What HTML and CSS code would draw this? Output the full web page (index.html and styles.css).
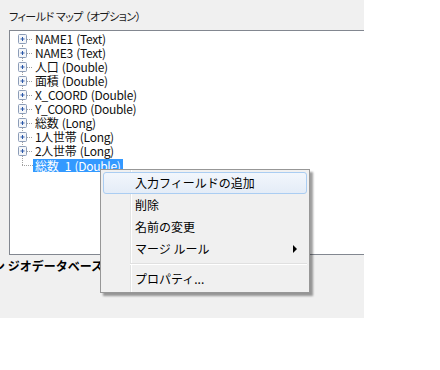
FILE: index.html
```html
<!DOCTYPE html>
<html lang="ja">
<head>
<meta charset="utf-8">
<link rel="stylesheet" href="styles.css">
</head>
<body>
<div class="panel">
  <div class="label">フィールド マップ （オプション）</div>
  <div class="treebox">
    <ul class="tree">
      <li class="row first"><svg class="conn" width="17" height="14" viewBox="0 0 17 14"><line class="dot" x1="6.5" y1="7" x2="6.5" y2="14"/><line class="dot" x1="11" y1="7.5" x2="17" y2="7.5"/><rect class="pbox" x="2.5" y="2.5" width="8" height="9" rx="1"/><path class="plus" d="M4.5 7h4M6.5 5v4"/></svg><span class="txt">NAME1 (Text)</span></li>
      <li class="row"><svg class="conn" width="17" height="14" viewBox="0 0 17 14"><line class="dot" x1="6.5" y1="0" x2="6.5" y2="14"/><line class="dot" x1="11" y1="7.5" x2="17" y2="7.5"/><rect class="pbox" x="2.5" y="2.5" width="8" height="9" rx="1"/><path class="plus" d="M4.5 7h4M6.5 5v4"/></svg><span class="txt">NAME3 (Text)</span></li>
      <li class="row"><svg class="conn" width="17" height="14" viewBox="0 0 17 14"><line class="dot" x1="6.5" y1="0" x2="6.5" y2="14"/><line class="dot" x1="11" y1="7.5" x2="17" y2="7.5"/><rect class="pbox" x="2.5" y="2.5" width="8" height="9" rx="1"/><path class="plus" d="M4.5 7h4M6.5 5v4"/></svg><span class="txt">人口 (Double)</span></li>
      <li class="row"><svg class="conn" width="17" height="14" viewBox="0 0 17 14"><line class="dot" x1="6.5" y1="0" x2="6.5" y2="14"/><line class="dot" x1="11" y1="7.5" x2="17" y2="7.5"/><rect class="pbox" x="2.5" y="2.5" width="8" height="9" rx="1"/><path class="plus" d="M4.5 7h4M6.5 5v4"/></svg><span class="txt">面積 (Double)</span></li>
      <li class="row"><svg class="conn" width="17" height="14" viewBox="0 0 17 14"><line class="dot" x1="6.5" y1="0" x2="6.5" y2="14"/><line class="dot" x1="11" y1="7.5" x2="17" y2="7.5"/><rect class="pbox" x="2.5" y="2.5" width="8" height="9" rx="1"/><path class="plus" d="M4.5 7h4M6.5 5v4"/></svg><span class="txt">X_COORD (Double)</span></li>
      <li class="row"><svg class="conn" width="17" height="14" viewBox="0 0 17 14"><line class="dot" x1="6.5" y1="0" x2="6.5" y2="14"/><line class="dot" x1="11" y1="7.5" x2="17" y2="7.5"/><rect class="pbox" x="2.5" y="2.5" width="8" height="9" rx="1"/><path class="plus" d="M4.5 7h4M6.5 5v4"/></svg><span class="txt">Y_COORD (Double)</span></li>
      <li class="row"><svg class="conn" width="17" height="14" viewBox="0 0 17 14"><line class="dot" x1="6.5" y1="0" x2="6.5" y2="14"/><line class="dot" x1="11" y1="7.5" x2="17" y2="7.5"/><rect class="pbox" x="2.5" y="2.5" width="8" height="9" rx="1"/><path class="plus" d="M4.5 7h4M6.5 5v4"/></svg><span class="txt">総数 (Long)</span></li>
      <li class="row"><svg class="conn" width="17" height="14" viewBox="0 0 17 14"><line class="dot" x1="6.5" y1="0" x2="6.5" y2="14"/><line class="dot" x1="11" y1="7.5" x2="17" y2="7.5"/><rect class="pbox" x="2.5" y="2.5" width="8" height="9" rx="1"/><path class="plus" d="M4.5 7h4M6.5 5v4"/></svg><span class="txt">1人世帯 (Long)</span></li>
      <li class="row"><svg class="conn" width="17" height="14" viewBox="0 0 17 14"><line class="dot" x1="6.5" y1="0" x2="6.5" y2="14"/><line class="dot" x1="11" y1="7.5" x2="17" y2="7.5"/><rect class="pbox" x="2.5" y="2.5" width="8" height="9" rx="1"/><path class="plus" d="M4.5 7h4M6.5 5v4"/></svg><span class="txt">2人世帯 (Long)</span></li>
      <li class="row"><svg class="conn" width="17" height="14" viewBox="0 0 17 14"><line class="dot" x1="6.5" y1="0" x2="6.5" y2="7.5"/><line class="dot" x1="6" y1="7.5" x2="17" y2="7.5"/></svg><span class="txt sel">総数_1 (Double)</span></li>
    </ul>
  </div>
  <div class="below">ン ジオデータベース フィーチャクラス</div>
</div>

<div class="menu">
  <div class="item hover"><span class="mtxt">入力フィールドの追加</span></div>
  <div class="item"><span class="mtxt">削除</span></div>
  <div class="item"><span class="mtxt">名前の変更</span></div>
  <div class="item"><span class="mtxt">マージ ルール</span><span class="arrow"></span></div>
  <div class="sep"></div>
  <div class="item"><span class="mtxt">プロパティ...</span></div>
</div>
</body>
</html>
```

FILE: styles.css
```css
html, body {
  margin: 0;
  padding: 0;
  background: #ffffff;
}
body {
  position: relative;
  width: 440px;
  height: 370px;
  overflow: hidden;
  font-family: "Noto Sans CJK JP", sans-serif;
  font-size: 12px;
  color: #000;
}
.panel {
  width: 364px;
  height: 318px;
  background: #f0f0f0;
  overflow: hidden;
  padding-top: 8px;
  box-sizing: border-box;
}
.label {
  margin-left: 9px;
  height: 16px;
  line-height: 16px;
  font-size: 11px;
  font-feature-settings: "palt";
  letter-spacing: -0.5px;
  color: #1a1a1a;
}
.treebox {
  margin-top: 6px;
  margin-left: 9px;
  width: 370px;
  height: 225px;
  box-sizing: border-box;
  border: 1px solid #828790;
  background: #fff;
}
.tree {
  list-style: none;
  margin: 0;
  padding: 1px 0 0 6px;
}
.row {
  display: flex;
  align-items: center;
  height: 14px;
}
.conn {
  display: block;
  flex: none;
}
.dot {
  stroke: #a0a0a0;
  stroke-width: 1;
  stroke-dasharray: 1 1;
}
.pbox {
  fill: #f4f6f9;
  stroke: #8c9db8;
  stroke-width: 1;
}
.plus {
  stroke: #2a57a8;
  stroke-width: 1;
  fill: none;
}
.txt {
  margin-left: 2px;
  height: 14px;
  line-height: 14px;
  letter-spacing: -0.3px;
  word-spacing: 1px;
  white-space: nowrap;
  color: #111;
}
.txt.sel {
  margin-left: 0;
  padding: 0 2px;
  line-height: 13px;
  height: 13px;
  background: #3399ff;
  color: #fff;
}
.below {
  margin-top: 4px;
  margin-left: -7px;
  font-weight: bold;
  white-space: nowrap;
  line-height: 14px;
}
.menu {
  position: absolute;
  left: 100px;
  top: 169px;
  width: 210px;
  box-sizing: border-box;
  border: 1px solid #979797;
  background: #f0f0f0 linear-gradient(to right, transparent 29px, #e2e3e3 29px, #e2e3e3 30px, #ffffff 30px, #ffffff 31px, transparent 31px);
  padding: 2px;
  box-shadow: 3px 3px 2px rgba(0, 0, 0, 0.38);
}
.item {
  display: flex;
  align-items: center;
  height: 22px;
  box-sizing: border-box;
  padding-left: 32px;
  padding-right: 8px;
  border: 1px solid transparent;
  border-radius: 3px;
  white-space: nowrap;
}
.item.hover {
  border-color: #aacdf2;
  background: linear-gradient(to bottom, #f2f6fc, #e4ecf7);
}
.mtxt {
  flex: 1;
  margin-left: -1px;
  line-height: 20px;
}
.arrow {
  width: 0;
  height: 0;
  border-top: 4px solid transparent;
  border-bottom: 4px solid transparent;
  border-left: 4px solid #000;
  margin-right: 1px;
}
.sep {
  height: 8px;
  margin-left: 27px;
  background: linear-gradient(to bottom, transparent 3px, #e0e0e0 3px, #e0e0e0 4px, #ffffff 4px, #ffffff 5px, transparent 5px);
}
```
